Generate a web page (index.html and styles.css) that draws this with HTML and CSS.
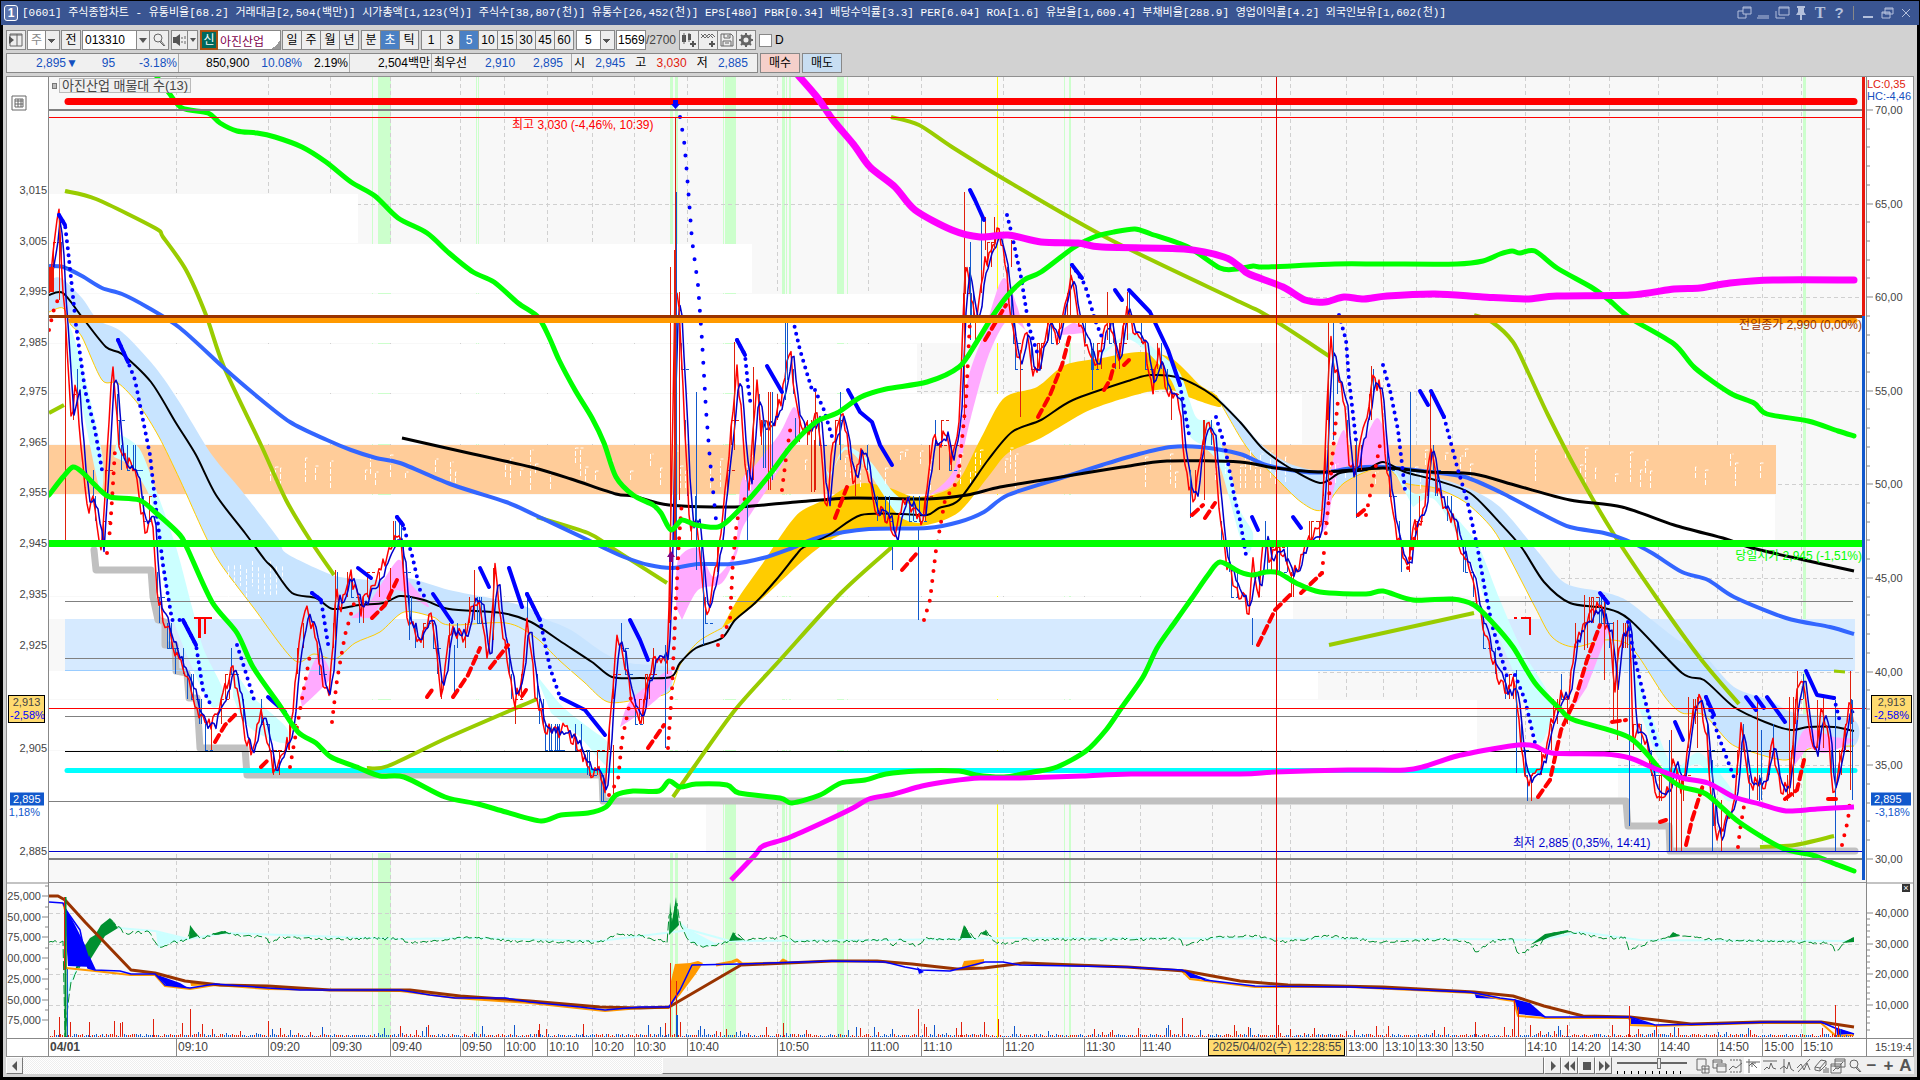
FILE: index.html
```
<!DOCTYPE html>
<html lang="ko">
<head>
    <meta charset="UTF-8">
    <title>[0601] 주식종합차트</title>
    <link rel="stylesheet" href="styles.css">
</head>
<body>
<svg class="sprite" aria-hidden="true">
    <symbol id="i-dock" viewBox="0 0 16 16"><path d="M7 2h8v7H7zM7 3h8M7 6H2v7h8V9"/></symbol>
    <symbol id="i-line" viewBox="0 0 16 16"><path d="M3 11h11M2 13h12"/></symbol>
    <symbol id="i-copy" viewBox="0 0 16 16"><path d="M5 2h10v8H5zM5 3h10M2 6v7h9"/></symbol>
    <symbol id="i-pin" viewBox="0 0 16 16"><path class="solid" d="M4 1h8v2h-1v4l2 3H3l2-3V3H4zM7 10h2v5H7z"/></symbol>
    <symbol id="i-min" viewBox="0 0 16 16"><path class="solid" d="M3 11h10v2H3z"/></symbol>
    <symbol id="i-restore" viewBox="0 0 16 16"><path d="M6 3h8v6H6zM6 4h8M3 7h8v6H3zM3 8h8"/></symbol>
    <symbol id="i-x" viewBox="0 0 16 16"><path d="M4 4l8 8M12 4l-8 8"/></symbol>
    <symbol id="i-panel" viewBox="0 0 16 16"><path d="M2 2h12v12H2zM2 3h12M9 2v12"/><path class="solid" d="M1 4l5 4-5 4z"/></symbol>
    <symbol id="i-zoom" viewBox="0 0 16 16"><circle cx="7" cy="6" r="4"/><path d="M10 9l4 5M9 10l4 4"/></symbol>
    <symbol id="i-sound" viewBox="0 0 16 16"><path class="solid" d="M1 5h3l4-3v12l-4-3H1z"/><path d="M10 5v2M10 9v2M13 4v3M13 9v3"/></symbol>
    <symbol id="i-candle" viewBox="0 0 16 16"><path class="solid" d="M1 3h4v7H1zM7 2h3v6H7zM9 11h6v2H9zM11 9h2v6h-2z"/><path d="M3 1v11M8 1v9"/></symbol>
    <symbol id="i-wave" viewBox="0 0 16 16"><path d="M1 6l4-4 3 4 4-4 3 3M1 2l4 4 4-4 4 4"/><path class="solid" d="M9 11h6v2H9zM11 9h2v6h-2z"/></symbol>
    <symbol id="i-save" viewBox="0 0 16 16"><path d="M2 2h10l2 2v10H2zM5 2v4h6V2M4 14V9h8v5M6 11h4M9 3v2"/></symbol>
    <symbol id="i-gear" viewBox="0 0 16 16"><circle cx="8" cy="8" r="4" stroke-width="3"/><path stroke-width="2" d="M8 1v3M8 12v3M1 8h3M12 8h3M3 3l2 2M11 11l2 2M13 3l-2 2M5 11l-2 2"/></symbol>
    <symbol id="i-table" viewBox="0 0 16 16"><path d="M1 1h14v14H1zM4 4h8v8H4zM4 6h8M4 9h8M7 4v8M10 4v8"/></symbol>
    <symbol id="i-add" viewBox="0 0 16 16"><path d="M3 1h9v6M3 1v11h4M8 8h7v7H8zM11 8v7M8 11h7"/></symbol>
    <symbol id="i-over" viewBox="0 0 16 16"><path d="M2 10V2h9v3M2 10h4M2 4h9M6 6h9v8H6zM6 8h9"/></symbol>
    <symbol id="i-range" viewBox="0 0 16 16"><path stroke-dasharray="2 1" d="M2 2h12M2 14h12"/><path d="M1 12l4-4 3 2 6-5M13 2v12"/></symbol>
    <symbol id="i-cross" viewBox="0 0 16 16"><path d="M1 4h14M4 1v14M4 8l3-3 5 5M7 9V5h4"/></symbol>
    <symbol id="i-hline" viewBox="0 0 16 16"><path d="M1 3h14M2 12l3-3 2 2 2-6 2 5 3 1"/></symbol>
    <symbol id="i-vline" viewBox="0 0 16 16"><path d="M5 1v14M1 11l4-3 3 3 2-7 2 7 3 2"/></symbol>
    <symbol id="i-trend" viewBox="0 0 16 16"><path d="M2 14L14 1M1 10l4-4 3 6 3-7 3 7"/></symbol>
    <symbol id="i-erase" viewBox="0 0 16 16"><path d="M2 9l6-7 5 1v4l-6 6-5-1zM2 9l5 1v3M7 10l6-7M11 11v4M13 9v6M15 10v5"/></symbol>
    <symbol id="i-stack" viewBox="0 0 16 16"><path d="M5 1h10v8H5zM5 3h10M1 6h10v9H1zM1 8h10M3 13l3-3 2 1 2-2M10 7l3-3"/></symbol>
    <symbol id="i-prev" viewBox="0 0 16 16"><path class="solid" d="M10 3v10L5 8z"/></symbol>
    <symbol id="i-play" viewBox="0 0 16 16"><path class="solid" d="M6 3v10l5-5z"/></symbol>
    <symbol id="i-rew" viewBox="0 0 16 16"><path class="solid" d="M7 3v10L2 8zM13 3v10L8 8z"/></symbol>
    <symbol id="i-stop" viewBox="0 0 16 16"><path class="solid" d="M4 4h8v8H4z"/></symbol>
    <symbol id="i-ff" viewBox="0 0 16 16"><path class="solid" d="M3 3v10l5-5zM9 3v10l5-5z"/></symbol>
</svg>

<header class="titlebar">
    <span class="badge">1</span>
    <h1 class="title">[0601] 주식종합차트 - 유통비율[68.2] 거래대금[2,504(백만)] 시가총액[1,123(억)] 주식수[38,807(천)] 유통수[26,452(천)] EPS[480] PBR[0.34] 배당수익률[3.3] PER[6.04] ROA[1.6] 유보율[1,609.4] 부채비율[288.9] 영업이익률[4.2] 외국인보유[1,602(천)]</h1>
    <div class="win-buttons">
        <button aria-label="분리"><svg><use href="#i-dock"/></svg></button>
        <button aria-label="접기"><svg><use href="#i-line"/></svg></button>
        <button aria-label="복사"><svg><use href="#i-copy"/></svg></button>
        <button aria-label="고정"><svg><use href="#i-pin"/></svg></button>
        <button class="serif">T</button>
        <button class="mark">?</button>
        <i class="rule"></i>
        <button aria-label="최소화"><svg><use href="#i-min"/></svg></button>
        <button aria-label="복원"><svg><use href="#i-restore"/></svg></button>
        <button aria-label="닫기"><svg><use href="#i-x"/></svg></button>
    </div>
</header>

<main class="window">
    <div class="toolbar">
        <button class="tool" aria-label="패널"><svg><use href="#i-panel"/></svg></button>
        <select class="pick muted" aria-label="구분"><option>주</option></select>
        <button class="tool">전</button>
        <div class="group">
            <input class="code" type="text" value="013310" aria-label="종목코드">
            <button class="drop" aria-label="종목목록"></button>
            <button class="tool" aria-label="종목검색"><svg><use href="#i-zoom"/></svg></button>
        </div>
        <div class="group">
            <button class="tool narrow" aria-label="소리"><svg><use href="#i-sound"/></svg></button>
            <button class="drop small" aria-label="소리설정"></button>
        </div>
        <div class="stock"><b>신</b><span>아진산업</span></div>
        <div class="group">
            <button class="tool">일</button><button class="tool">주</button><button class="tool">월</button><button class="tool">년</button>
        </div>
        <div class="group">
            <button class="tool">분</button><button class="tool on">초</button><button class="tool">틱</button>
        </div>
        <div class="group">
            <button class="tool">1</button><button class="tool">3</button><button class="tool on">5</button><button class="tool">10</button><button class="tool">15</button><button class="tool">30</button><button class="tool">45</button><button class="tool">60</button>
        </div>
        <select class="pick wide" aria-label="주기"><option>5</option></select>
        <div class="count"><input type="text" value="1569" aria-label="봉 개수"><span>/2700</span></div>
        <div class="group">
            <button class="tool" aria-label="차트추가"><svg><use href="#i-candle"/></svg></button>
            <button class="tool" aria-label="지표추가"><svg><use href="#i-wave"/></svg></button>
            <button class="tool" aria-label="저장"><svg><use href="#i-save"/></svg></button>
            <button class="tool" aria-label="설정"><svg><use href="#i-gear"/></svg></button>
        </div>
        <label class="check"><input type="checkbox">D</label>
    </div>

    <div class="quote">
        <div class="quote-box">
            <div class="cell c1 down"><span>2,895▼</span><span>95</span><span>-3.18%</span></div>
            <div class="cell c2"><span>850,900</span><span class="down">10.08%</span><span>2.19%</span></div>
            <div class="cell c3"><span>2,504백만</span></div>
            <div class="cell c4"><span>최우선</span><span class="down">2,910</span><span class="down">2,895</span></div>
            <div class="cell c5"><span>시</span><span class="down">2,945</span><span>고</span><span class="up">3,030</span><span>저</span><span class="down">2,885</span></div>
        </div>
        <button class="buy">매수</button>
        <button class="sell">매도</button>
    </div>

    <section class="chart">
        <div class="axis left" id="left"><svg class="table-icon"><use href="#i-table"/></svg></div>
        <div class="plot">
            <svg id="plot" viewBox="49 77 1817 961" preserveAspectRatio="none"></svg>
            <div class="legend"><i></i><span>아진산업 매물대 수(13)</span></div>
            <div id="notes"></div>
        </div>
        <div class="axis right" id="right">
            <span class="lc">LC:0,35</span><span class="hc">HC:-4,46</span>
            <button class="close" aria-label="지표닫기">×</button>
        </div>
        <div class="corner"></div>
        <div class="times" id="times"></div>
        <div class="corner last">15:19:4</div>
    </section>

    <footer class="bottom">
        <button class="step" aria-label="왼쪽"><svg><use href="#i-prev"/></svg></button>
        <div class="track"><div class="thumb"></div></div>
        <button class="step" aria-label="재생"><svg><use href="#i-play"/></svg></button>
        <button class="step" aria-label="뒤로"><svg><use href="#i-rew"/></svg></button>
        <button class="step" aria-label="정지"><svg><use href="#i-stop"/></svg></button>
        <button class="step" aria-label="앞으로"><svg><use href="#i-ff"/></svg></button>
        <input class="speed" type="range" min="0" max="10" value="6" aria-label="속도">
        <div class="draw-tools">
            <button aria-label="추가"><svg><use href="#i-add"/></svg></button>
            <button aria-label="겹치기"><svg><use href="#i-over"/></svg></button>
            <button aria-label="범위"><svg><use href="#i-range"/></svg></button>
            <button class="on" aria-label="십자선"><svg><use href="#i-cross"/></svg></button>
            <button aria-label="수평선"><svg><use href="#i-hline"/></svg></button>
            <button aria-label="수직선"><svg><use href="#i-vline"/></svg></button>
            <button aria-label="추세선"><svg><use href="#i-trend"/></svg></button>
            <button aria-label="지우기"><svg><use href="#i-erase"/></svg></button>
            <button aria-label="창"><svg><use href="#i-stack"/></svg></button>
            <button aria-label="돋보기"><svg><use href="#i-zoom"/></svg></button>
            <button>−</button><button>+</button><button>A</button>
        </div>
    </footer>
</main>
<script src="chart.js"></script>
</body>
</html>
```

FILE: styles.css
```
* {
    box-sizing: border-box;
}
body {
    margin: 0;
    height: 100vh;
    padding: 1px 1px 3px;
    background: #000;
    display: flex;
    flex-direction: column;
    font: 12px "Liberation Sans", "Noto Sans CJK KR", sans-serif;
    color: #000;
    overflow: hidden;
}
button, input, select {
    font: inherit;
    color: inherit;
    margin: 0;
    padding: 0;
    border-radius: 0;
}
button {
    display: flex;
    align-items: center;
    justify-content: center;
    line-height: 16px;
}
svg {
    display: block;
}
button svg, .table-icon {
    width: 16px;
    height: 16px;
    flex: none;
    fill: none;
    stroke: #666;
}
.solid {
    fill: #555;
    stroke: none;
}
.sprite {
    display: none;
}

/* 제목줄 */
.titlebar {
    height: 24px;
    flex: none;
    background: #3a5592;
    color: #fff;
    display: flex;
    align-items: center;
    gap: 4px;
    padding: 0 4px 0 3px;
}
.badge {
    width: 14px;
    height: 16px;
    border: 1px solid #fff;
    border-radius: 3px;
    background: #5b74ad;
    text-align: center;
    line-height: 14px;
    font-weight: bold;
}
.title {
    flex: 1;
    margin: 0;
    font-size: 11px;
    font-weight: normal;
    line-height: 20px;
    white-space: nowrap;
    font-family: "Liberation Mono", "Noto Sans CJK KR", monospace;
}
.win-buttons {
    display: flex;
    align-items: center;
    gap: 1px;
}
.win-buttons button {
    width: 18px;
    height: 18px;
    border: 0;
    background: none;
    color: #b4c0dc;
}
.win-buttons svg {
    stroke: #b4c0dc;
}
.win-buttons .serif {
    font: bold 16px "Liberation Serif", serif;
}
.win-buttons .mark {
    font-weight: bold;
    font-size: 15px;
}
.win-buttons .rule {
    width: 1px;
    height: 14px;
    margin: 0 4px;
    background: #888;
}
#i-pin .solid, #i-min .solid {
    fill: #b4c0dc;
}

.window {
    flex: 1;
    min-height: 0;
    margin: 0 2px;
    padding: 0 3px 3px;
    background: #d2d2d2;
    display: flex;
    flex-direction: column;
}

/* 도구줄 */
.toolbar {
    display: flex;
    gap: 1px;
    height: 28px;
    flex: none;
    padding: 5px 0 3px;
}
.toolbar .group {
    display: flex;
    margin-right: 1px;
}
.tool, .drop {
    width: 20px;
    height: 20px;
    border: 1px solid #888;
    background: #eee;
}
.group .tool {
    width: 20px;
    margin-right: -1px;
}
.group .tool:last-child {
    margin-right: 0;
}
.tool.on {
    background: #4a80c4;
    color: #fff;
}
.group .tool.narrow {
    width: 17px;
}
.drop {
    width: 14px;
    margin: 0 -1px;
}
.drop.small {
    width: 11px;
    margin: 0;
}
.drop::after {
    content: "";
    border: 4px solid transparent;
    border-top: 5px solid #555;
    border-bottom: 0;
}
.drop.small::after {
    border-width: 4px 3px 0;
}
.pick {
    appearance: none;
    width: 33px;
    height: 20px;
    padding: 0 3px;
    border: 1px solid #888;
    background:
        linear-gradient(#555, #555) right 4px top 8px / 7px 1px no-repeat,
        linear-gradient(#555, #555) right 5px top 9px / 5px 1px no-repeat,
        linear-gradient(#555, #555) right 6px top 10px / 3px 1px no-repeat,
        linear-gradient(#555, #555) right 7px top 11px / 1px 1px no-repeat,
        linear-gradient(#888, #888) right 13px top / 1px 18px no-repeat,
        linear-gradient(#eee, #eee) right / 13px 18px no-repeat,
        #fff;
}
.pick.muted {
    color: #888;
}
.pick.wide {
    width: 39px;
    padding-left: 8px;
}
.code {
    width: 55px;
    height: 20px;
    border: 1px solid #888;
    padding-left: 2px;
}
.stock {
    width: 81px;
    height: 20px;
    border: 1px solid #888;
    background: linear-gradient(135deg, transparent 50%, #999 50%) right bottom / 8px 8px no-repeat, #fff;
    display: flex;
    align-items: center;
    gap: 2px;
    color: #80004c;
    white-space: nowrap;
}
.stock b {
    width: 18px;
    height: 20px;
    margin: -1px 0 -1px -1px;
    border: 2px solid #a85010;
    background: #00695c;
    color: #fff;
    font-weight: normal;
    text-align: center;
    line-height: 16px;
}
.count {
    display: flex;
    align-items: center;
    color: #444;
    width: 66px;
    margin-right: -4px;
}
.count input {
    width: 30px;
    height: 20px;
    border: 1px solid #888;
    padding-left: 1px;
    color: #000;
}
.check {
    display: flex;
    align-items: center;
    gap: 3px;
    margin-left: 1px;
}
.check input {
    appearance: none;
    width: 13px;
    height: 13px;
    border: 1px solid #888;
    background: #fff;
}

/* 시세줄 */
.quote {
    display: flex;
    gap: 2px;
    height: 23px;
    flex: none;
    padding-bottom: 3px;
}
.quote-box {
    display: flex;
    border: 1px solid #888;
    background: #f0f0f0;
}
.cell {
    display: flex;
    align-items: center;
    justify-content: space-between;
    border-right: 1px solid #aaa;
    white-space: nowrap;
    line-height: 16px;
}
.cell:last-child {
    border-right: 0;
}
.c1 {
    width: 172px;
    padding: 0 1px 0 29px;
}
.c2 {
    width: 171px;
    padding: 0 1px 0 27px;
}
.c3 {
    width: 82px;
    justify-content: flex-end;
    padding-right: 1px;
}
.c4 {
    width: 140px;
    padding: 0 8px 0 2px;
}
.c5 {
    width: 185px;
    padding: 0 9px 0 2px;
}
.down {
    color: #1550c0;
}
.up {
    color: #e0200c;
}
.buy, .sell {
    width: 40px;
    border: 1px solid #888;
    background: #f5d0ca;
}
.sell {
    background: #c8def2;
}

/* 차트 */
.chart {
    flex: 1;
    min-height: 0;
    border: 1px solid #909090;
    background: #fff;
    display: grid;
    grid-template-columns: 42px 1fr 47px;
    grid-template-rows: 1fr 18px;
    font-size: 11px;
    line-height: 14px;
    color: #444;
}
.plot, .axis, .times {
    position: relative;
    min-height: 0;
    min-width: 0;
    overflow: hidden;
}
.plot > svg {
    position: absolute;
    width: 100%;
    height: 100%;
}
.axis.left {
    border-right: 1px solid #888;
}
.axis.right {
    border-left: 1px solid #888;
}
.axis span, .axis i {
    position: absolute;
    transform: translateY(-50%);
    white-space: nowrap;
}
.axis i {
    height: 1px;
    width: 3px;
    background: #888;
}
.axis i.major {
    width: 6px;
}
.left i {
    right: 0;
}
.left span {
    right: 1px;
}
.left span.vol {
    right: 7px;
}
.right i {
    left: 0;
}
.right span {
    left: 8px;
}
.right .lc, .right .hc {
    left: 0;
    top: 7px;
    color: #e0200c;
}
.right .hc {
    top: 19px;
    color: #1550c0;
}
.table-icon {
    position: absolute;
    left: 4px;
    top: 18px;
}
.axis .tag {
    left: 1px;
    right: 3px;
    padding: 0 1px;
    border: 1px solid #000;
    background: #ffdb70;
    line-height: 13px;
    text-align: center;
    z-index: 1;
}
.axis .tag em {
    display: block;
    font-style: normal;
    color: #0000ff;
}
.right .tag {
    left: 4px;
    right: 1px;
}
.axis .now {
    left: 3px;
    right: 4px;
    background: #1158cc;
    color: #fff;
    line-height: 13px;
    padding-left: 3px;
    z-index: 1;
}
.right .now {
    left: 4px;
    right: 2px;
}
.axis .rate {
    color: #1158cc;
    right: 8px;
}
.right .rate {
    right: auto;
}
.close {
    position: absolute;
    right: 3px;
    top: 84%;
    width: 8px;
    height: 8px;
    border: 0;
    background: #333;
    color: #fff;
    font-size: 9px;
    line-height: 8px;
}
.legend {
    position: absolute;
    left: 3px;
    top: 1px;
    display: flex;
    align-items: center;
    gap: 2px;
    font-size: 13px;
}
.legend i {
    width: 5px;
    height: 6px;
    border: 1px solid #777;
    background: #bbb;
}
.legend span {
    padding: 0 2px;
    border: 1px solid #bbb;
    background: #f0f0f0;
    line-height: 13px;
}
#notes span {
    position: absolute;
    transform: translateY(-50%);
    white-space: nowrap;
    font-size: 12px;
}
.corner, .times {
    border-top: 1px solid #888;
}
.corner {
    border-right: 1px solid #888;
    line-height: 17px;
}
.corner.last {
    border-right: 0;
    border-left: 1px solid #888;
    padding-left: 8px;
}
.times {
    font-size: 12px;
}
.times span {
    position: absolute;
    top: 0;
    bottom: 0;
    padding-left: 1px;
    border-left: 1px solid #888;
    line-height: 17px;
}
.times .day {
    border: 0;
    font-weight: bold;
}
.times .cursor {
    border: 1px solid #000;
    background: #ffdb70;
    width: 137px;
    text-align: center;
    white-space: nowrap;
    line-height: 15px;
}

/* 아래 스크롤 */
.bottom {
    display: flex;
    height: 17px;
    flex: none;
    background: #f0f0f0;
}
.step {
    width: 17px;
    height: 17px;
    border: 1px solid;
    border-color: #fff #777 #777 #fff;
    background: #f0f0f0;
}
.step .solid {
    fill: #000;
}
.track {
    flex: 1;
    background: repeating-conic-gradient(#fff 0 25%, #eee 0 50%) 0 0 / 2px 2px;
}
.thumb {
    margin-left: 42%;
    height: 17px;
    border: 1px solid;
    border-color: #fff #777 #777 #fff;
    background: #f0f0f0;
}
.speed {
    appearance: none;
    width: 70px;
    height: 17px;
    margin: 0 6px 0 5px;
    background:
        linear-gradient(#666, #666) 0 5px / 100% 2px no-repeat,
        repeating-linear-gradient(90deg, #000 0 1px, transparent 1px 7px) 0 14px / 100% 3px no-repeat;
}
.speed::-webkit-slider-thumb {
    appearance: none;
    width: 4px;
    height: 11px;
    margin-top: -4px;
    border: 1px solid #777;
    background: #eee;
}
.draw-tools {
    display: flex;
}
.draw-tools button {
    width: 17px;
    height: 17px;
    border: 0;
    background: none;
    font: bold 17px "Liberation Sans", sans-serif;
    color: #555;
}
.draw-tools button.on {
    background: #fff;
}
```

FILE: chart.js
```
var svg = document.getElementById('plot');
var X0 = 49, Y0 = 77, W = 1817, H = 961;

function add(name, attrs) {
    var el = document.createElementNS('http://www.w3.org/2000/svg', name);
    for (var k in attrs) {
        el.setAttribute(k, attrs[k]);
    }
    svg.appendChild(el);
}
function rect(x1, y1, x2, y2, fill) {
    add('rect', {x: x1, y: y1, width: x2 - x1, height: y2 - y1, fill: fill});
}
function line(points, color, width, extra) {
    var attrs = {points: points, fill: 'none', stroke: color, 'stroke-width': width, 'stroke-linejoin': 'round'};
    for (var k in extra) {
        attrs[k] = extra[k];
    }
    add('polyline', attrs);
}
function area(points, fill) {
    add('polygon', {points: points, fill: fill});
}
function parse(s) {
    return s.split(' ').map(function (p) {
        return p.split(',').map(Number);
    });
}
// 점들을 지나는 부드러운 곡선
function smooth(s) {
    var p = parse(s), d = 'M' + p[0];
    for (var i = 0; i < p.length - 1; i++) {
        var a = p[i - 1] || p[i], b = p[i], c = p[i + 1], e = p[i + 2] || c;
        d += 'C' + [b[0] + (c[0] - a[0]) / 7, b[1] + (c[1] - a[1]) / 7,
            c[0] - (e[0] - b[0]) / 7, c[1] - (e[1] - b[1]) / 7, c[0], c[1]].join(' ');
    }
    return d;
}
function curve(points, color, width, extra) {
    var attrs = {d: smooth(points), fill: 'none', stroke: color, 'stroke-width': width, 'stroke-linejoin': 'round'};
    for (var k in extra) {
        attrs[k] = extra[k];
    }
    add('path', attrs);
}
function cloud(points, fill) {
    add('path', {d: smooth(points) + 'Z', fill: fill});
}
var seed = 7;
function rnd() {
    seed = (seed * 16807) % 2147483647;
    return seed / 2147483647;
}
// 두 점 사이 값
function at(pts, x) {
    for (var i = 1; i < pts.length; i++) {
        if (x <= pts[i][0]) {
            var a = pts[i - 1], b = pts[i];
            return a[1] + (b[1] - a[1]) * (x - a[0]) / ((b[0] - a[0]) || 1);
        }
    }
    return pts[pts.length - 1][1];
}

// 배경, 세로 강조 띠
rect(49, 77, 1866, 1038, '#f8f8f8');
[[372, 1], [378, 13], [476, 1], [478, 1], [670, 3], [675, 3], [723, 1], [725, 11], [782, 3], [786, 1], [789, 2],
    [837, 7], [847, 1], [1064, 1], [1069, 2], [1803, 3]].forEach(function (b) {
    rect(b[0], 77, b[0] + b[1], 1038, '#ccffcc');
});
rect(997, 77, 998, 1038, '#ffff00');

// 격자
var vgrid = [176, 268, 330, 390, 460, 504, 547, 592, 634, 687, 777, 868, 921, 1003, 1084, 1140, 1212, 1261, 1290,
    1346, 1383, 1416, 1452, 1525, 1569, 1609, 1658, 1717, 1762, 1801];
vgrid.forEach(function (x) {
    line(x + '.5,77 ' + x + '.5,1038', '#d0d0d0', 1, {'stroke-dasharray': '4 3'});
});
[204, 297, 391, 484, 578, 672, 765, 913, 944, 974, 1005].forEach(function (y) {
    line('49,' + y + '.5 1862,' + y + '.5', '#d0d0d0', 1, {'stroke-dasharray': '4 3'});
});

// 매물대
[[194, 243, 358], [244, 293, 752], [294, 343, 1280], [344, 393, 917], [394, 444, 1302], [495, 545, 1775],
    [546, 596, 1540], [597, 619, 1293], [671, 699, 1318], [700, 750, 1477], [751, 801, 1618], [802, 853, 706]
].forEach(function (b) {
    rect(49, b[0], b[2], b[1], '#fff');
});
rect(49, 445, 1776, 494, '#ffcc99');
rect(65, 619, 1855, 671, '#d6eaff');

// 구름대
var blue = '#c8e4ff', cyan = '#ccffff', pink = '#ffaaff', gold = '#ffcc00';
cloud('49,280 61,278 82,298 98,320 122,332 155,367 180,403 212,455 241,490 278,538 286,553 327,573 347,578 380,580 408,578 449,590 490,598 527,607 543,618 571,630 604,653 629,663 669,668 669,692 640,699 608,702 584,682 559,660 535,637 506,623 449,625 433,617 404,612 380,632 355,643 335,659 314,654 294,660 253,607 220,563 204,533 180,480 159,437 139,405 118,383 102,380 82,337 71,325 63,308 49,312', blue);
cloud('1216,395 1240,420 1262,445 1288,463 1320,471 1344,467 1383,463 1422,473 1465,487 1500,507 1539,553 1565,583 1604,592 1626,600 1652,620 1678,640 1704,655 1734,687 1769,700 1795,713 1854,720 1854,746 1812,748 1786,760 1752,752 1730,743 1704,715 1682,713 1665,697 1639,657 1626,643 1604,640 1574,647 1552,637 1535,607 1509,557 1492,528 1465,502 1435,488 1405,483 1383,467 1344,483 1322,510 1301,502 1275,477 1253,455 1240,437', blue);
cloud('722,628 739,597 763,563 780,537 800,512 829,498 845,488 865,483 890,488 918,497 955,485 980,440 1004,398 1037,387 1065,365 1102,358 1139,352 1171,358 1200,385 1216,395 1220,407 1188,397 1171,390 1147,392 1090,410 1041,438 1008,453 988,477 959,512 927,525 886,527 845,533 812,553 763,598 735,620', gold);
curve('49,312 63,308 71,325 82,337 102,380 118,383 139,405 159,437 180,480 204,533 220,563 253,607 294,660 314,654 335,659 355,643 380,632 404,612 433,617 449,625 506,623 535,637 559,660 584,682 608,702 640,699 669,692 680,665 698,642 722,628', gold, 1);
curve('1216,395 1240,437 1253,455 1275,477 1301,502 1322,510 1344,483 1383,467 1405,483 1435,488 1465,502 1492,528 1509,557 1535,607 1552,637 1574,647 1604,640 1626,643 1639,657 1665,697 1682,713 1704,715 1730,743 1752,752 1786,760 1812,748 1854,746', gold, 1);
[
    '67,320 78,350 102,453 100,490 82,407 69,360',
    '118,433 139,448 155,487 176,547 192,607 204,650 224,693 212,707 192,667 171,613 161,563 151,500 131,467 114,457',
    '233,667 253,697 286,727 286,743 265,737 245,723 233,697',
    '535,673 563,707 592,730 608,743 608,767 580,737 551,713',
    '816,433 829,473 845,447 869,460 894,493 922,513 922,523 898,515 865,467 845,450 829,480',
    '1086,332 1102,350 1131,333 1159,353 1180,373 1196,417 1212,423 1229,467 1240,510 1253,533 1249,553 1240,537 1220,467 1204,447 1188,433 1171,380 1131,340 1102,355',
    '1392,467 1413,493 1435,493 1461,523 1479,547 1500,600 1522,650 1552,703 1539,743 1518,683 1492,620 1470,560 1435,500 1413,507',
    '1630,653 1652,717 1674,767 1700,753 1734,793 1726,800 1700,765 1665,770 1635,697'
].forEach(function (p) { cloud(p, cyan); });
[
    '300,697 318,655 331,673 327,683 302,707',
    '351,618 371,600 398,560 408,580 429,607 396,590 371,618',
    '620,727 631,700 669,670 669,687 641,713',
    '676,607 678,560 698,548 714,577 735,550 741,483 757,463 780,433 794,407 800,433 771,483 743,527 737,553 722,583 698,590 682,620',
    '927,497 955,467 967,383 984,333 1004,278 1024,327 1029,333 1008,320 988,357 971,417 955,480 935,493',
    '1053,338 1073,323 1086,332 1061,335',
    '1322,533 1333,460 1344,430 1353,463 1377,418 1390,457 1370,467 1340,470 1327,527',
    '1574,707 1600,630 1609,627 1587,687',
    '1791,770 1804,730 1834,737 1854,740 1826,753 1808,747'
].forEach(function (p) { cloud(p, pink); });

// 매물대 안쪽 흰 점선
for (var wx = 270; wx < 1770; wx += 5) {
    if (rnd() < 0.34) {
        var wt = 448 + rnd() * 26, wb = wt + 6 + rnd() * (490 - wt - 6);
        line(wx + '.5,' + wb.toFixed() + ' ' + wx + '.5,' + wt.toFixed() + ' ' + (wx + 3) + '.5,' + wt.toFixed(), '#fff', 1, {'stroke-dasharray': '5 2'});
    }
}
for (wx = 228; wx < 285; wx += 6) {
    line(wx + '.5,' + (555 + rnd() * 20) + ' ' + wx + '.5,' + (580 + rnd() * 25), '#fff', 1, {'stroke-dasharray': '4 2'});
}

// 저가 계단선
line('94,550 96,570 151,570 153,597 158,620 165,622 165,645 175,645 176,671 187,673 189,698 197,698 200,748 245,748 247,775 602,775 603,801 1626,801 1628,826 1669,826 1670,851 1855,851', '#c0c0c0', 7, {'stroke-linecap': 'round'});

// 수평선
line('65,601.5 1853,601.5', '#808080', 1);
line('65,658.5 1853,658.5', '#808080', 1);
line('65,670.5 1853,670.5', '#99ccff', 1);
line('65,716.5 1853,716.5', '#808080', 1);
line('49,801.5 603,801.5', '#808080', 1);
line('65,751.5 1853,751.5', '#000', 1);
line('67,770.5 1855,770.5', '#00ffff', 5, {'stroke-linecap': 'round'});

// 이동평균
var olive = '#99cc00';
curve('65,191 96,199 155,228 163,237 186,270 206,315 224,367 261,445 286,500 310,540 334,575', olive, 4);
curve('49,413 64,405', olive, 4);
curve('537,517 588,533 612,548 667,583', olive, 4);
curve('367,768 388,766 449,737 537,699', olive, 4);
curve('673,797 694,767 735,710 780,660 841,593 892,547', olive, 4);
curve('891,117 919,125 952,147 1009,182 1111,240 1240,302 1266,315 1329,356', olive, 4);
curve('1329,645 1474,613', olive, 4);
curve('1474,315 1492,322 1513,342 1528,372 1548,415 1578,473 1613,533 1656,597 1700,658 1739,704', olive, 4);
curve('1760,847 1795,845 1834,836', olive, 4);
curve('1834,671 1845,672', olive, 3);
curve('49,266 63,267 82,276 102,288 122,294 147,307 180,328 224,368 253,393 290,422 327,440 351,450 376,458 400,463 453,485 506,502 535,515 588,540 604,548 624,557 649,565 673,568 698,564 731,564 763,558 792,548 820,537 869,529 927,528 959,522 984,512 1008,495 1061,478 1102,465 1139,454 1171,447 1200,447 1240,454 1266,465 1305,472 1327,472 1353,468 1383,467 1431,472 1465,477 1500,492 1544,515 1570,527 1604,533 1626,540 1652,553 1682,572 1708,580 1734,597 1786,618 1830,627 1854,634', '#3366ff', 4);
curve('402,438 473,454 531,467 571,479 616,494 633,496 669,505 735,507 796,502 853,498 927,499 967,495 1000,487 1049,479 1122,467 1167,461 1240,462 1275,468 1322,472 1383,468 1431,472 1474,474 1518,486 1570,500 1622,507 1674,525 1726,539 1752,548 1804,560 1854,571', '#000', 3);
curve('49,295 63,293 82,317 106,347 122,354 151,382 176,423 196,455 216,495 245,533 265,560 273,568 292,593 316,598 333,609 359,605 384,603 400,596 424,600 449,609 502,613 531,622 563,643 592,662 612,677 640,678 671,677 680,663 696,648 722,638 735,620 755,603 776,580 796,555 804,547 829,535 861,515 902,514 927,515 939,508 959,500 988,460 1012,432 1041,420 1073,400 1131,380 1151,375 1180,378 1212,395 1240,422 1262,448 1288,467 1320,483 1340,473 1366,470 1383,462 1405,472 1435,480 1470,493 1500,523 1522,548 1544,582 1570,603 1604,608 1630,620 1682,673 1704,680 1734,707 1765,722 1791,730 1808,727 1834,727 1854,731', '#000', 2);

// 주가
var price = parse('49,280 55,243 59,210 62,285 65,310 70,407 73,415 76,375 79,420 84,480 88,508 93,495 98,525 100,565 106,480 110,400 113,360 116,400 120,455 128,465 135,468 140,500 145,530 152,510 155,560 158,600 165,622 175,650 186,671 195,700 204,725 212,727 222,700 232,670 238,690 245,735 252,755 262,710 273,770 290,740 300,640 307,610 316,640 325,695 330,690 336,590 341,605 350,572 360,610 368,595 380,575 390,548 395,537 402,548 406,610 418,640 432,615 441,697 450,630 465,635 473,600 480,600 488,665 495,570 502,630 515,700 522,680 527,615 535,690 545,730 565,730 580,745 590,775 600,770 605,800 610,720 617,640 622,650 630,690 640,727 645,690 655,660 668,655 671,500 675,300 678,293 682,367 690,533 696,510 704,590 707,615 714,580 720,540 733,413 737,367 743,433 748,497 753,433 757,387 761,430 775,420 784,387 790,350 798,420 804,430 812,427 818,413 826,513 833,443 843,413 853,483 861,447 869,477 875,510 890,518 894,547 904,497 922,520 933,437 939,450 945,430 951,463 959,423 963,317 966,257 969,287 976,327 984,267 988,257 998,230 1006,267 1012,327 1018,363 1027,333 1033,380 1049,323 1057,340 1071,277 1078,320 1096,367 1108,317 1118,363 1127,303 1133,330 1143,337 1153,387 1159,353 1169,397 1178,393 1186,473 1194,500 1204,430 1212,427 1218,493 1224,553 1235,585 1249,610 1253,560 1258,600 1264,535 1270,560 1280,548 1290,575 1297,570 1305,545 1320,530 1324,480 1327,400 1331,340 1335,370 1345,400 1350,475 1357,465 1362,440 1370,400 1373,375 1380,390 1385,450 1392,510 1398,540 1408,570 1413,525 1424,515 1430,440 1437,490 1450,520 1456,520 1459,550 1470,565 1478,610 1490,650 1500,680 1508,695 1515,680 1522,760 1530,785 1545,755 1552,720 1561,695 1568,700 1575,640 1590,620 1598,605 1604,620 1612,640 1614,700 1620,640 1630,620 1633,740 1640,730 1648,750 1657,800 1668,790 1674,760 1682,790 1692,715 1700,700 1706,730 1712,800 1718,840 1725,820 1735,800 1741,725 1750,790 1755,780 1765,785 1772,740 1781,795 1790,780 1796,700 1803,675 1808,720 1814,760 1822,710 1828,730 1833,795 1840,760 1846,720 1852,700 1854,750');
var red = '#e0200c', navy = '#0000cc', cblue = '#1158cc';
var redLine = [], blueLine = [], tick = 25.4;
for (var x = 49; x <= 1854; x += 2) {
    var y = at(price, x), before = at(price, Math.max(49, x - 3)), after = at(price, x + 2);
    redLine.push(x + ',' + (y + rnd() * 16 - 8).toFixed(1));
    blueLine.push(x + 1 + ',' + (before * 0.6 + y * 0.4 + rnd() * 10 - 5).toFixed(1));
    // 봉은 호가 단위에 맞춘다
    if (rnd() < 0.34) {
        var n = Math.floor((y - 191) / tick);
        var high = Math.round(191 + n * tick), low = Math.round(191 + (n + 1) * tick);
        var tone = after < y ? red : cblue;
        line(x + '.5,' + high + ' ' + x + '.5,' + low, tone, 1);
        if (rnd() < 0.4) {
            var edge = after < y ? high : low;
            line(x + ',' + edge + '.5 ' + (x + 9) + ',' + edge + '.5', tone, 1, {'stroke-dasharray': '3 2'});
        }
    }
}
line(redLine.join(' '), '#ff0000', 1.5);
line(blueLine.join(' '), navy, 1.5);
// 긴 꼬리
[[59, 213, 300, red], [65, 320, 540, red], [53, 267, 291, red], [670, 267, 620, red], [674, 250, 540, red], [675, 118, 540, red], [676, 192, 560, cblue],
    [679, 292, 500, red], [696, 392, 570, cblue], [703, 560, 645, cblue], [665, 645, 748, cblue], [734, 342, 450, red],
    [747, 470, 540, cblue], [753, 367, 480, red], [768, 392, 490, red], [770, 392, 490, red], [772, 392, 480, cblue], [763, 420, 468, cblue], [765, 420, 468, cblue],
    [785, 317, 400, cblue], [787, 317, 380, cblue], [815, 392, 490, red], [811, 420, 492, red], [814, 440, 492, red], [795, 418, 442, cblue], [799, 418, 442, red],
    [918, 530, 620, cblue], [892, 540, 570, cblue], [840, 392, 460, cblue], [964, 192, 420, red], [970, 242, 340, cblue], [981, 217, 270, cblue], [985, 217, 250, red],
    [994, 217, 250, red], [1011, 240, 267, red], [1020, 350, 417, red], [1070, 267, 320, red], [1107, 292, 340, red], [1127, 292, 340, red],
    [1092, 350, 390, cblue], [1190, 470, 518, cblue], [1204, 420, 500, red], [1252, 618, 645, cblue], [1328, 318, 500, red], [1333, 318, 440, cblue],
    [1371, 366, 420, red], [1410, 392, 540, cblue], [1430, 392, 480, red], [1356, 440, 518, cblue], [1516, 670, 773, cblue], [1584, 595, 650, red],
    [1604, 595, 680, red], [1613, 622, 720, red], [1617, 620, 740, red], [1629, 622, 826, cblue], [1669, 740, 851, cblue], [1671, 730, 851, red], [1676, 770, 851, red],
    [1681, 780, 851, red], [1712, 760, 851, cblue], [1721, 800, 851, red], [1797, 671, 720, red], [1835, 700, 851, cblue], [1850, 671, 790, red], [1852, 700, 800, cblue],
    [390, 568, 600, red], [335, 570, 640, red], [474, 570, 620, red], [454, 645, 698, cblue], [613, 745, 800, red], [493, 568, 640, red], [409, 595, 640, cblue],
    [1688, 697, 748, red], [1697, 697, 748, red], [1757, 700, 800, red], [1761, 730, 800, cblue], [1789, 697, 797, red], [1793, 697, 797, red], [1817, 700, 748, red], [1823, 697, 748, red]
].forEach(function (c) {
    line(c[0] + '.5,' + c[1] + ' ' + c[0] + '.5,' + c[2], c[3], 1);
});
rect(49, 267, 54, 292, '#f01808');
rect(194, 617, 212, 619, '#f00');
rect(198, 619, 201, 638, '#f00');
rect(204, 619, 206, 634, '#f00');
rect(1514, 617, 1517, 619, '#f00');
rect(1521, 617, 1531, 619, '#f00');
rect(1529, 619, 1531, 635, '#f00');

// 파라볼릭 점
['59,215 65,225 68,250 76,325 85,390 95,430 102,470', '118,340 128,362 135,380 140,405 150,455 155,500 163,565 172,620 183,620 196,645 203,690 212,707',
    '237,645 245,670 255,703', '312,593 321,600 329,650', '397,517 403,525 412,555 420,590 427,600',
    '527,594 540,620 550,668 561,700', '737,340 745,355 748,385 751,407', '793,320 800,350 812,390', '815,390 824,410 833,440',
    '1007,215 1012,235 1021,277 1029,327 1037,352', '1072,265 1085,285 1095,320 1103,340',
    '1180,385 1190,440', '1216,417 1225,447 1235,500 1240,520 1246,555',
    '1339,315 1346,340 1349,380 1356,440', '1383,365 1390,390 1398,430 1405,490', '1444,417 1458,470 1467,500 1477,545 1485,590 1492,625 1508,680',
    '1515,675 1525,700 1535,743', '1628,622 1635,660 1650,720 1658,750', '1706,697 1718,735 1735,780', '1834,698 1840,722'
].forEach(function (p) {
    line(p, '#0000ff', 4, {'stroke-dasharray': '0 7', 'stroke-linecap': 'round'});
});
['59,215 65,225', '118,340 128,362', '183,620 196,645', '268,697 285,712', '312,593 321,600', '358,568 371,578', '397,517 403,525', '433,594 452,622', '480,568 489,587',
    '509,568 522,607', '527,594 540,620', '561,698 585,710 605,735', '630,620 640,640 648,660', '737,340 745,355', '767,366 782,392', '848,390 860,412 872,422 880,445 892,465',
    '970,190 975,200 984,220', '1072,265 1082,278', '1115,290 1122,300', '1129,290 1150,312 1168,350 1180,385', '1252,517 1258,530', '1293,517 1301,528', '1420,391 1428,405',
    '1431,391 1444,417', '1600,593 1608,603', '1675,722 1683,740', '1706,697 1714,715', '1746,697 1756,710', '1756,697 1764,708', '1767,697 1785,722', '1806,671 1817,695 1834,698'
].forEach(function (p) {
    line(p, '#0000ff', 4, {'stroke-linecap': 'round'});
});
line('680,117 684,140 686,162 689,200 692,240 698,285 702,340 706,410 710,460 716,520', '#0000ff', 4, {'stroke-dasharray': '0 13', 'stroke-linecap': 'round'});
['107,553 110,530 112,500 115,450', '49,330 55,305 61,295', '290,767 300,710 310,655', '332,722 337,680 345,635 355,600', '609,795 618,780 622,740 631,697',
    '668,748 672,690 676,600 679,540 682,500', '718,645 730,620 733,560 737,520 748,490', '782,490 787,450 791,425', '924,620 930,600 936,550 945,500 958,480 966,400 970,320',
    '1322,573 1327,520 1333,450 1338,400', '1366,515 1373,480 1380,445', '1408,568 1418,520', '1738,847 1740,830 1745,800', '1842,845 1848,820 1850,800'
].forEach(function (p) {
    line(p, '#ff0000', 4, {'stroke-dasharray': '0 10', 'stroke-linecap': 'round'});
});
['215,742 225,725 238,712', '261,767 268,760', '372,618 385,605 397,580', '427,697 432,690', '453,697 468,675 480,648', '490,668 508,645', '522,696 526,690', '648,748 664,725',
    '835,518 847,487', '902,570 917,553', '985,340 1006,305', '1038,417 1050,395 1062,365 1070,335', '1104,390 1110,380 1114,365', '1124,365 1129,360', '1192,515 1203,505',
    '1205,518 1215,503', '1258,645 1275,610 1292,593', '1301,593 1322,573', '1358,515 1364,510', '1538,797 1550,780 1561,730 1575,700 1587,660 1600,625', '1612,722 1626,720',
    '1660,822 1666,820', '1686,845 1692,820 1703,785', '1785,799 1797,790 1804,760', '1828,799 1840,799'
].forEach(function (p) {
    line(p, '#ff0000', 4, {'stroke-dasharray': '8 5', 'stroke-linecap': 'round'});
});

// 밴드
var green = '#00ff00', magenta = '#ff00ff', round = {'stroke-linecap': 'round'};
curve('157,77 169,93 182,108 208,113 220,123 237,131 257,133 275,137 302,147 326,162 351,182 375,196 398,218 427,233 449,253 473,272 494,282 518,303 538,317 549,337 559,360 575,390 592,418 604,443 616,477 633,495 653,505 661,513 671,530 682,520 696,525 718,527 731,518 751,497 771,473 792,445 816,422 837,413 861,397 886,389 927,382 959,367 976,343 992,317 1008,295 1024,280 1041,272 1073,248 1094,237 1114,232 1135,229 1151,234 1188,247 1220,268 1237,269 1253,266 1266,267 1335,264 1383,264 1457,264 1483,261 1500,254 1512,251 1520,253 1535,251 1557,268 1591,287 1609,300 1630,318 1674,344 1695,368 1730,393 1754,403 1767,414 1808,421 1838,431 1854,436', green, 5, round);
curve('49,495 63,477 73,467 82,472 98,488 110,497 139,500 155,512 180,535 188,550 212,602 237,633 253,667 278,703 298,732 316,743 331,757 359,768 380,776 404,777 445,797 478,804 506,812 541,821 561,815 588,813 606,807 616,795 633,791 659,791 669,781 680,787 696,784 727,785 739,793 780,798 792,803 820,795 841,783 865,780 886,774 918,771 959,771 976,775 1004,777 1033,772 1057,767 1086,751 1106,730 1122,707 1143,677 1157,648 1175,622 1192,598 1208,575 1220,562 1240,572 1253,575 1266,572 1279,573 1296,583 1320,592 1366,594 1383,591 1413,600 1452,599 1474,605 1492,622 1513,647 1535,683 1561,710 1574,720 1630,738 1665,775 1682,787 1706,794 1739,822 1782,848 1812,855 1838,865 1854,871', green, 5, round);
line('68,101.5 1854,101.5', '#ff0000', 7, round);
curve('797,74 817,97 833,120 854,145 870,167 895,187 915,210 952,230 980,237 1008,235 1041,242 1078,243 1102,247 1184,249 1224,257 1240,267 1249,274 1283,287 1305,300 1325,302 1344,297 1364,299 1387,296 1435,294 1483,297 1526,299 1557,296 1630,295 1674,289 1700,288 1730,283 1773,280 1854,280', magenta, 7, round);
curve('731,880 755,855 763,846 788,838 824,822 853,808 869,799 894,794 922,786 951,781 980,778 1020,778 1082,776 1131,774 1240,774 1275,772 1348,770 1405,770 1426,766 1457,756 1492,749 1518,745 1535,746 1552,753 1604,754 1630,758 1656,769 1682,778 1708,783 1734,797 1760,804 1786,811 1817,809 1854,807', magenta, 5);
line('49,110 1862,110', '#808080', 2);
line('49,117.5 1862,117.5', '#ff0000', 1);
line('71,320.5 1855,320.5', '#ff9900', 5, round);
line('49,316.5 1862,316.5', '#993300', 3);
line('49,543.5 1862,543.5', green, 7);
line('49,708.5 1866,708.5', '#ff0000', 1);
line('49,851.5 1862,851.5', '#0000cc', 1);
line('49,859 1862,859', '#808080', 2);
area('673,100 678,100 678,104 680,104 675.5,109 671,104 673,104', '#0000ff');
area('669,562 673,562 673,557 675,557 671,551 667,557 669,557', '#800080');
rect(1862, 77, 1865, 316, '#e8180c');
rect(1862, 316, 1865, 880, cblue);

// 거래량 창
var flow = parse('49,941 63,942 65,1035 70,985 80,965 90,940 100,932 110,920 118,927 125,933 150,932 158,948 170,943 188,940 191,928 200,938 225,932 240,936 265,937 269,942 280,938 400,939 410,943 475,937 510,941 600,942 620,934 640,936 667,942 670,905 673,925 676,897 680,925 690,942 705,947 730,941 735,933 745,940 780,938 785,935 795,942 888,940 893,945 900,940 918,946 925,938 960,940 965,927 975,938 986,930 995,942 1010,944 1020,940 1180,939 1184,946 1210,938 1258,936 1280,942 1330,936 1380,942 1450,939 1470,942 1475,953 1490,942 1513,938 1518,955 1540,943 1550,935 1568,931 1600,938 1625,937 1629,950 1650,942 1675,935 1720,940 1830,943 1836,952 1845,942 1854,939');
var flowLine = [];
area('66,1035 70,985 80,965 90,950 78,965 68,985', cyan);
area('156,932 158,948 170,943 188,940 170,935', cyan);
area('680,922 690,930 715,943 730,941 705,947 690,942', cyan);
for (x = 49; x <= 1854; x += 2) {
    y = at(flow, x);
    flowLine.push(x + ',' + (y + rnd() * 3 - 1.5).toFixed(1));
}
line('118,928 155,931 188,939 225,933 400,939 475,938 600,941 640,936 690,930 730,941 890,940 1010,938 1460,939 1540,940 1580,932 1640,940 1854,941', cyan, 2);
line(flowLine.join(' '), '#009030', 1, {'stroke-dasharray': '9 3'});
['75,970 82,950 90,938 95,935 101,925 110,918 118,928 105,936 90,960', '189,939 190,925 198,936', '212,934 222,931 229,933 215,935', '669,935 670,902 672,922 676,897 678,917 679,925 674,930',
    '729,941 733,932 737,937 744,940', '960,938 964,925 972,938', '981,934 986,930 988,936', '1530,945 1545,934 1568,930 1569,932 1550,937', '1668,938 1673,932 1680,936', '1842,943 1854,937 1854,942'
].forEach(function (p) { area(p, '#009030'); });

area('64,905 68,966 92,967 85,945 75,925', '#0000ff');
['155,974 167,986 190,989 180,983', '1182,970 1190,978 1210,980', '1474,992 1476,998 1500,999', '1514,999 1518,1014 1546,1017 1530,1003', '1628,1017 1630,1024 1655,1025', '1820,1022 1836,1028 1837,1035 1854,1034',
    '87,968 89,955 96,970', '917,967 919,974 924,972'
].forEach(function (p) { area(p, '#0000ff'); });
area('670,1006 671,981 675,964 690,963 698,961 703,963 695,975 680,995', '#ff9900');
area('961,969 964,961 984,959 984,963 968,969', '#ff9900');
area('190,981 191,986 215,985', '#ff9900');
line('63,903 65,910 66,968', '#ff9900', 2);
line('66,968 95,971 131,975 155,975 165,986 190,989 215,985 268,989 400,991 455,998 530,1003 605,1011 640,1008 669,1008', '#ff9900', 2);
line('716,965 732,962 737,960 742,964 780,963 783,960 787,962', '#ff9900', 3);
line('1182,971 1190,979 1255,987 1350,987 1474,993 1500,999 1514,1001 1518,1016 1545,1018 1630,1018 1630,1025 1655,1026 1760,1023 1821,1023 1836,1036 1854,1035', '#ff9900', 2);
line('49,896 58,896 65,900 85,922 131,970 155,973 185,981 220,985 268,986 330,990 410,990 460,996 530,1001 600,1007 640,1008 669,1007 741,965 765,964 832,961 877,961 912,964 957,969 984,968 1024,963 1127,967 1185,971 1240,981 1288,985 1383,987 1474,992 1513,996 1544,1006 1583,1016 1630,1017 1691,1024 1760,1022 1821,1022 1854,1027', '#993300', 3);
line('49,902 63,903 66,910 80,930 88,968 95,970 120,971 131,974 155,974 165,985 190,988 215,984 268,988 300,990 400,990 430,995 455,998 505,998 530,1002 580,1007 605,1010 640,1007 669,1007 680,990 692,965 741,964 832,961 885,962 905,967 921,970 950,971 985,962 1003,962 1020,965 1127,967 1182,970 1205,980 1255,986 1350,987 1470,992 1500,998 1515,1000 1530,1010 1545,1017 1630,1017 1655,1025 1710,1024 1770,1022 1821,1022 1835,1028 1854,1034', '#0000ff', 1.5);

for (x = 50; x < 1854; x += 2) {
    var h = 1 + Math.round(rnd() * 2);
    if (rnd() < 0.13) {
        h = 3 + Math.round(rnd() * (x < 240 ? 14 : 9));
    }
    rect(x, 1037 - h, x + 1, 1037, rnd() < 0.5 ? red : cblue);
}
[[59, 20], [70, 15], [89, 15], [122, 15], [153, 18], [190, 28], [268, 16], [400, 11], [428, 12], [539, 13], [583, 13], [665, 14], [670, 74], [676, 56], [680, 15], [783, 14],
    [918, 28], [924, 13], [961, 15], [984, 15], [998, 18], [1182, 19], [1278, 12], [1475, 15], [1514, 37], [1518, 30], [1530, 12], [1629, 31], [1656, 12], [1835, 32], [1567, 12]
].forEach(function (b) {
    rect(b[0], 1037 - b[1], b[0] + 1, 1037, red);
});
line('65.5,897 65.5,1037', '#009030', 2);
line('64.5,897 64.5,970', red, 1);
line('67.5,969 67.5,1037', cblue, 1);
rect(676, 1015, 678, 1037, cblue);

line('49,882.5 1866,882.5', '#909090', 1);
line('1276.5,77 1276.5,1038', '#e00000', 1);

// 축 글자
function put(id, html, styles, cls) {
    var el = document.createElement(cls === 'tick' || cls === 'major' ? 'i' : 'span');
    el.innerHTML = html;
    if (cls) {
        el.className = cls;
    }
    for (var k in styles) {
        el.style[k] = styles[k];
    }
    document.getElementById(id).appendChild(el);
}
function py(v) {
    return ((v - Y0) / H * 100).toFixed(3) + '%';
}
function px(v) {
    return ((v - X0) / W * 100).toFixed(3) + '%';
}
[['3,015', 190], ['3,005', 241], ['2,995', 291], ['2,985', 342], ['2,975', 391], ['2,965', 442], ['2,955', 492], ['2,945', 543],
    ['2,935', 594], ['2,925', 645], ['2,905', 748], ['2,885', 851]].forEach(function (t) {
    put('left', t[0], {top: py(t[1])});
});
['25,000', '50,000', '75,000', '00,000', '25,000', '50,000', '75,000'].forEach(function (t, i) {
    var ty = 896 + i * 20.7;
    put('left', t, {top: py(ty)}, 'vol');
    put('left', '', {top: py(ty)}, 'major');
    put('left', '', {top: py(ty - 10)}, 'tick');
});
['70,00', '65,00', '60,00', '55,00', '50,00', '45,00', '40,00', '35,00', '30,00'].forEach(function (t, i) {
    var ty = 110 + i * 93.6;
    put('right', t, {top: py(ty)});
    put('right', '', {top: py(ty)}, 'major');
    for (var j = 1; j < 5 && i < 8; j++) {
        put('right', '', {top: py(ty + j * 18.7)}, 'tick');
    }
});
['40,000', '30,000', '20,000', '10,000'].forEach(function (t, i) {
    var ty = 913 + i * 30.7;
    put('right', t, {top: py(ty)});
    put('right', '', {top: py(ty)}, 'major');
    for (var j = 1; j < 5; j++) {
        put('right', '', {top: py(ty + j * 6.1)}, 'tick');
    }
});
['left', 'right'].forEach(function (id) {
    put(id, '', {top: py(883), width: '100%'}, 'major');
    put(id, '2,913<em>-2,58%</em>', {top: py(708.5)}, 'tag');
    put(id, '2,895', {top: py(799)}, 'now');
    put(id, id === 'left' ? '1,18%' : '-3,18%', {top: py(812)}, 'rate');
});

[['최고 3,030 (-4,46%, 10:39)', 512, 125, '#ff0000'], ['최저 2,885 (0,35%, 14:41)', 1513, 843, '#0000cc']].forEach(function (n) {
    put('notes', n[0], {left: px(n[1]), top: py(n[2]), color: n[3]});
});
[['전일종가 2,990 (0,00%)', 325, '#993300'], ['당일시가 2,945 (-1,51%)', 556, '#00ff00']].forEach(function (n) {
    put('notes', n[0], {right: '4px', top: py(n[1]), color: n[2]});
});

put('times', '04/01', {left: 0}, 'day');
[['09:10', 176], ['09:20', 268], ['09:30', 330], ['09:40', 390], ['09:50', 460], ['10:00', 504], ['10:10', 547], ['10:20', 592], ['10:30', 634], ['10:40', 687],
    ['10:50', 777], ['11:00', 868], ['11:10', 921], ['11:20', 1003], ['11:30', 1084], ['11:40', 1140], ['13:00', 1346], ['13:10', 1383], ['13:30', 1416], ['13:50', 1452],
    ['14:10', 1525], ['14:20', 1569], ['14:30', 1609], ['14:40', 1658], ['14:50', 1717], ['15:00', 1762], ['15:10', 1801]].forEach(function (t) {
    put('times', t[0], {left: px(t[1])});
});
put('times', '2025/04/02(수) 12:28:55', {left: px(1208)}, 'cursor');
```
